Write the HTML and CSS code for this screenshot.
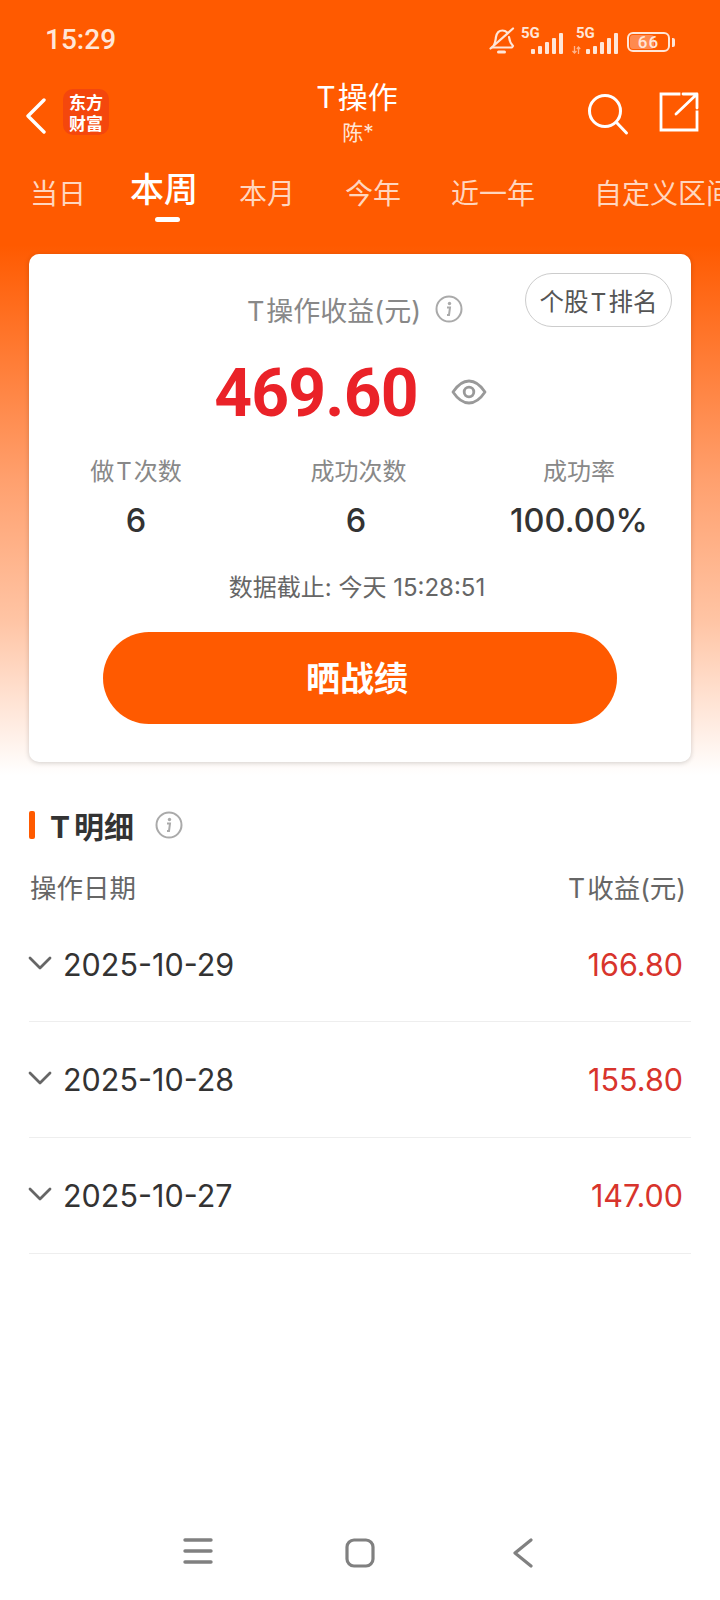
FILE: index.html
```html
<!DOCTYPE html>
<html lang="zh-CN">
<head>
<meta charset="utf-8">
<title>T操作</title>
<link rel="stylesheet" href="styles.css">
</head>
<body>
<div class="screen">
  <div class="status">
    <span class="time">15:29</span>
    <div class="status-icons">
      <svg class="bell" width="26" height="28" viewBox="0 0 26 28" fill="none" stroke="#ffe6d8" stroke-width="2.2" stroke-linecap="round" stroke-linejoin="round">
        <path d="M5 18c1.500-2.500 1.500-5 2-8 .7-4 3-6.500 6.500-6.500 2 0 3.500.8 4.700 2M20 10c.4 3.500 1.200 6 4 9l-1 1.500H3"/>
        <path d="M1.500 21.500 24 1.500"/>
        <path d="M9.500 25h6" stroke-width="3"/>
      </svg>
      <div class="net">
        <span class="net-label">5G</span>
        <span class="bars"><i class="b1"></i><i class="b2"></i><i class="b3"></i><i class="b4"></i><i class="b5"></i></span>
      </div>
      <div class="net">
        <span class="net-label">5G</span>
        <svg class="updown" width="9" height="8" viewBox="0 0 9 8" fill="none" stroke="#ffb48c" stroke-width="1.300"><path d="M2.500 0v7M.5 5l2 2 2-2M6.500 8V1M4.800 3l1.700-2 1.700 2"/></svg>
        <span class="bars"><i class="b1"></i><i class="b2"></i><i class="b3"></i><i class="b4"></i><i class="b5"></i></span>
      </div>
      <div class="battery"><span class="battery-fill"></span><span class="battery-num">66</span></div>
      <span class="battery-nub"></span>
    </div>
  </div>

  <div class="header">
    <svg class="back" width="24" height="36" viewBox="0 0 24 36" fill="none" stroke="#fff" stroke-width="3.4" stroke-linecap="round" stroke-linejoin="round"><path d="M20 2 4 18l16 16"/></svg>
    <div class="logo"><span>东方</span><span>财富</span></div>
    <div class="title-block">
      <div class="title"><span class="lt">T</span>操作</div>
      <div class="subtitle">陈*</div>
    </div>
    <div class="header-actions">
      <svg width="44" height="44" viewBox="0 0 44 44" fill="none" stroke="#fff" stroke-width="3" stroke-linecap="round"><circle cx="19" cy="19" r="15.500"/><path d="m31 31 9.500 10"/></svg>
      <svg class="open" width="40" height="40" viewBox="0 0 40 40" fill="none" stroke="#fff" stroke-width="2.800"><path d="M20 2H2v36h36V20" stroke-linecap="square"/><path d="M38 2H24M38 2v14M38 2 17 22" stroke-linecap="round"/></svg>
    </div>
  </div>

  <div class="tabs">
    <span class="tab">当日</span>
    <span class="tab tab-active">本周</span>
    <span class="tab">本月</span>
    <span class="tab">今年</span>
    <span class="tab tab-wide">近一年</span>
    <span class="tab">自定义区间</span>
  </div>

  <div class="card">
    <button class="rank">个股<span class="lt">T</span>排名</button>
    <div class="profit-label">
      <span><span class="lt">T</span>操作收益(元)</span>
      <svg class="info" width="28" height="28" viewBox="0 0 28 28"><circle cx="14" cy="14" r="12.500" fill="none" stroke="#aaa" stroke-width="2"/><circle cx="14.500" cy="8.500" r="1.700" fill="#aaa"/><path d="M12 12.500h3l-1 7.500h-2" fill="none" stroke="#aaa" stroke-width="2"/></svg>
    </div>
    <div class="profit">
      <span class="amount">469.60</span>
      <svg class="eye" width="36" height="26" viewBox="0 0 36 26" fill="none" stroke="#999" stroke-width="2.800" stroke-linejoin="round"><path d="M2 13C7 5.500 12 2 18 2s11 3.500 16 11c-5 7.500-10 11-16 11S7 20.500 2 13Z"/><circle cx="18" cy="13" r="4.800"/></svg>
    </div>
    <div class="stats">
      <div class="stat"><div class="stat-label">做<span class="lt">T</span>次数</div><div class="stat-value">6</div></div>
      <div class="stat"><div class="stat-label">成功次数</div><div class="stat-value">6</div></div>
      <div class="stat"><div class="stat-label">成功率</div><div class="stat-value">100.00%</div></div>
    </div>
    <div class="deadline">数据截止: 今天 15:28:51</div>
    <button class="share">晒战绩</button>
  </div>

  <div class="section-head">
    <span class="accent"></span>
    <span class="section-title"><span class="lt-tight">T</span>明细</span>
    <svg class="info" width="28" height="28" viewBox="0 0 28 28"><circle cx="14" cy="14" r="12.500" fill="none" stroke="#aaa" stroke-width="2"/><circle cx="14.500" cy="8.500" r="1.700" fill="#aaa"/><path d="M12 12.500h3l-1 7.500h-2" fill="none" stroke="#aaa" stroke-width="2"/></svg>
  </div>
  <div class="table-head"><span>操作日期</span><span><span class="lt">T</span>收益(元)</span></div>
  <div class="row">
    <svg class="chev" width="24" height="16" viewBox="0 0 24 16" fill="none" stroke="#666" stroke-width="2.800" stroke-linecap="round" stroke-linejoin="round"><path d="m2 3 10 10L22 3"/></svg>
    <span class="date">2025-10-29</span><span class="gain">166.80</span>
  </div>
  <div class="row">
    <svg class="chev" width="24" height="16" viewBox="0 0 24 16" fill="none" stroke="#666" stroke-width="2.800" stroke-linecap="round" stroke-linejoin="round"><path d="m2 3 10 10L22 3"/></svg>
    <span class="date">2025-10-28</span><span class="gain">155.80</span>
  </div>
  <div class="row">
    <svg class="chev" width="24" height="16" viewBox="0 0 24 16" fill="none" stroke="#666" stroke-width="2.800" stroke-linecap="round" stroke-linejoin="round"><path d="m2 3 10 10L22 3"/></svg>
    <span class="date">2025-10-27</span><span class="gain">147.00</span>
  </div>

  <div class="navbar">
    <svg width="30" height="26" viewBox="0 0 30 26" fill="none" stroke="#808080" stroke-width="3.400" stroke-linecap="round"><path d="M2 2h26M2 13h26M2 24h26"/></svg>
    <svg width="30" height="30" viewBox="0 0 30 30" fill="none" stroke="#808080" stroke-width="3.200"><rect x="2" y="2" width="26" height="26" rx="7"/></svg>
    <svg class="nav-back" width="20" height="30" viewBox="0 0 20 30" fill="none" stroke="#808080" stroke-width="3.200" stroke-linecap="round" stroke-linejoin="round"><path d="M18 2 2 15l16 13"/></svg>
  </div>
</div>
</body>
</html>
```
FILE: styles.css
```css
* { box-sizing: border-box; margin: 0; padding: 0; }
html, body { width: 720px; height: 1600px; overflow: hidden; background: #fff; }
body { font-family: Inter, "Noto Sans CJK SC", sans-serif; color: #333; }
.screen {
  width: 720px; height: 1600px; display: flex; flex-direction: column; overflow: hidden;
  background: linear-gradient(180deg, #ff5a00 0, #ff5a00 245px, #ffa06e 480px, #ffc4a4 620px, #fff 775px, #fff 100%);
}
.lt { padding: 0 2px; }
.lt-tight { padding-right: 4px; }
.status { height: 76px; flex: none; display: flex; align-items: center; justify-content: space-between; padding: 4px 45px 0 45px; }
.time { font-family: Roboto, sans-serif; font-size: 28px; font-weight: 500; color: #ffe6d8; line-height: 1; }
.status-icons { display: flex; align-items: flex-end; height: 30px; color: #ffe6d8; }
.bell { margin-right: 2px; }
.net { position: relative; width: 46px; height: 26px; margin-right: 9px; }
.net-label { position: absolute; left: 4px; top: -3px; font-family: Roboto, sans-serif; font-size: 15px; font-weight: 700; line-height: 14px; }
.updown { position: absolute; left: 0; bottom: 1px; }
.bars { position: absolute; right: 0; bottom: 1px; display: flex; align-items: flex-end; gap: 3px; }
.bars i { display: block; width: 4px; background: #ffe6d8; border-radius: 1px; }
.b1 { height: 5px; } .b2 { height: 8px; } .b3 { height: 12px; } .b4 { height: 16px; } .b5 { height: 21px; }
.battery { position: relative; width: 43px; height: 20px; border: 2px solid #ffe6d8; border-radius: 6px; margin-bottom: 3px; }
.battery-fill { position: absolute; left: 1px; top: 1px; bottom: 1px; width: 24px; background: #ff8a4f; border-radius: 3px; }
.battery-num { position: absolute; inset: 0; text-align: center; font-family: Roboto, sans-serif; font-size: 17px; line-height: 16px; font-weight: 500; letter-spacing: 1px; color: #ffe6d8; }
.battery-nub { width: 3px; height: 9px; margin: 0 0 8px 2px; background: #ffe6d8; border-radius: 0 2px 2px 0; }

.header { position: relative; height: 76px; flex: none; display: flex; align-items: center; padding-left: 24px; }
.back { margin-right: 15px; margin-top: 3px; }
.logo { width: 46px; height: 46px; margin-top: -4px; border-radius: 10px; background: #f4470d; color: #fff; font-size: 17px; font-weight: 700; line-height: 21px; display: flex; flex-direction: column; align-items: center; justify-content: center; font-family: "Noto Sans CJK SC", sans-serif; }
.title-block { position: absolute; left: 0; right: 8px; top: 2px; text-align: center; color: #fff; }
.title { font-size: 30px; line-height: 38px; color: #fff; }
.subtitle { font-size: 21px; line-height: 26px; color: #ffe6d8; margin-top: 4px; padding-left: 4px; }
.header-actions { margin-left: auto; display: flex; align-items: center; gap: 29px; padding-right: 21px; }
.open { margin-top: -4px; }

.tabs { height: 72px; flex: none; display: flex; align-items: center; gap: 50px; padding: 12px 0 0 30px; white-space: nowrap; overflow: hidden; }
.tab { position: relative; font-size: 28px; line-height: 36px; color: #ffd6bf; flex: none; }
.tab-active { font-size: 34px; font-weight: 500; color: #fff; margin: -8px -9px 0 -6px; }
.tab-active::after { content: ""; position: absolute; left: 25px; top: 45px; width: 25px; height: 5px; border-radius: 3px; background: #fff; }
.tab-wide { margin-right: 9px; }

.card { position: relative; flex: none; margin: 30px 29px 0; height: 508px; background: #fff; border-radius: 10px; box-shadow: 0 1px 5px rgba(0,0,0,.18); text-align: center; padding-top: 37px; }
.rank { position: absolute; top: 19px; right: 19px; width: 147px; height: 54px; border: 1px solid #ccc; border-radius: 27px; background: #fff; font: inherit; font-size: 24.500px; color: #555; }
.profit-label { display: flex; justify-content: center; align-items: center; gap: 14px; height: 36px; font-size: 27px; color: #888; padding-right: 12px; }
.profit { display: flex; justify-content: center; align-items: center; gap: 33px; height: 84px; margin-top: 25px; padding-right: 19px; }
.amount { font-family: Roboto, sans-serif; font-size: 66px; font-weight: 700; letter-spacing: -.8px; color: #ea2228; line-height: 84px; }
.eye { margin-top: -4px; }
.stats { display: grid; grid-template-columns: 214px 226px 220px; margin-top: 18px; }
.stat-label { font-size: 24px; line-height: 36px; color: #888; }
.stat:nth-child(2) .stat-label { padding-left: 5px; }
.stat-value { font-size: 32.500px; font-weight: 500; line-height: 44px; margin-top: 9px; color: #333; }
.deadline { font-size: 24px; line-height: 34px; color: #666; margin-top: 28px; padding-right: 6px; }
.share { display: block; width: 514px; height: 92px; margin: 27px auto 0; border: 0; border-radius: 46px; background: #ff5a00; color: #fff; font: inherit; font-size: 34px; font-weight: 700; padding: 0 6px 4px 0; }

.section-head { display: flex; align-items: center; height: 40px; margin-top: 43px; padding-left: 29px; flex: none; }
.accent { width: 6px; height: 28px; border-radius: 2px; background: #ff5a00; margin-right: 15px; }
.section-title { font-size: 30px; font-weight: 700; color: #333; margin-right: 21px; }
.table-head { display: flex; justify-content: space-between; flex: none; height: 36px; margin-top: 25px; padding: 0 34px 0 30px; font-size: 26.500px; line-height: 36px; color: #666; }
.row { display: flex; align-items: center; flex: none; height: 116px; margin: 0 29px; border-bottom: 1px solid #eee; padding-right: 8px; }
.table-head + .row { padding-top: 2px; }
.chev { margin-right: 11px; margin-left: -1px; margin-top: -4px; }
.date { font-size: 30.500px; color: #333; }
.gain { margin-left: auto; font-size: 30.500px; color: #d8342c; }

.navbar { margin-top: auto; height: 62px; flex: none; display: flex; align-items: flex-start; gap: 132px; padding-left: 183px; }
.nav-back { margin-left: 6px; }
```
